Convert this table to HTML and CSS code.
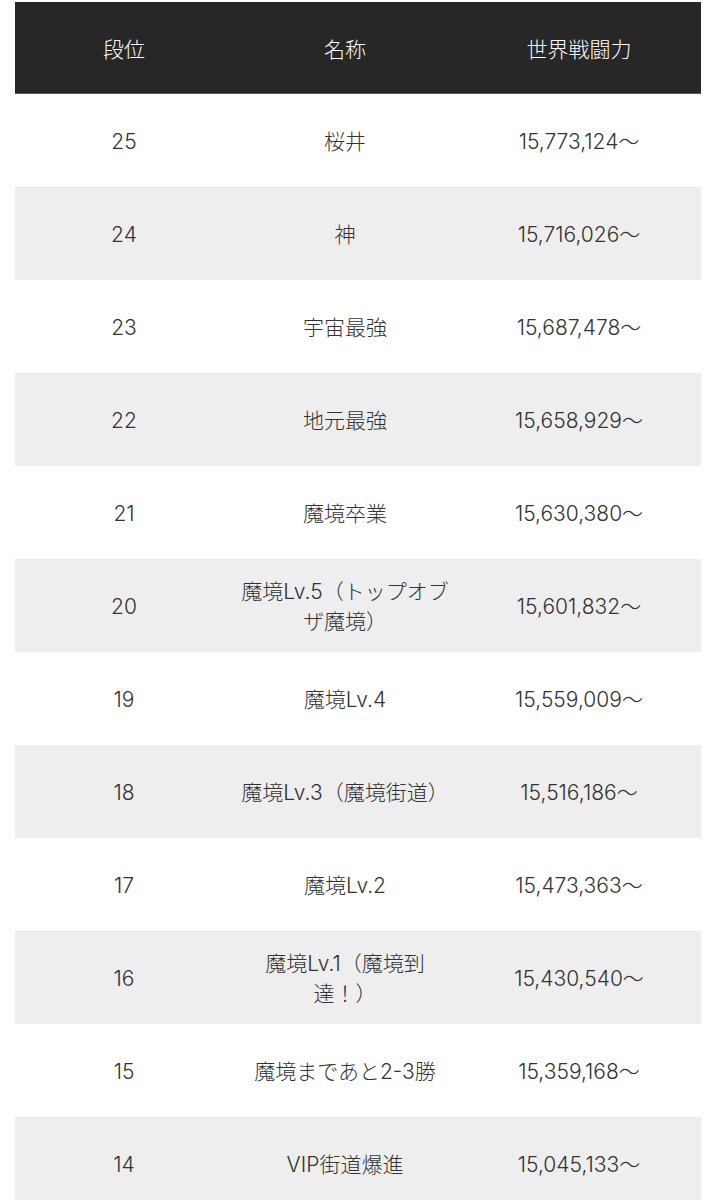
FILE: index.html
```html
<!DOCTYPE html>
<html lang="ja">
<head>
<meta charset="utf-8">
<title>段位表</title>
<link rel="stylesheet" href="styles.css">
</head>
<body>
<div class="page">
<table class="rank-table">
  <colgroup>
    <col class="c-rank">
    <col class="c-name">
    <col class="c-power">
  </colgroup>
  <thead>
    <tr><th>段位</th><th>名称</th><th>世界戦闘力</th></tr>
  </thead>
  <tbody>
    <tr><td>25</td><td>桜井</td><td>15,773,124〜</td></tr>
    <tr><td>24</td><td>神</td><td>15,716,026〜</td></tr>
    <tr><td>23</td><td>宇宙最強</td><td>15,687,478〜</td></tr>
    <tr><td>22</td><td>地元最強</td><td>15,658,929〜</td></tr>
    <tr><td>21</td><td>魔境卒業</td><td>15,630,380〜</td></tr>
    <tr><td>20</td><td>魔境Lv.5（トップオブザ魔境）</td><td>15,601,832〜</td></tr>
    <tr><td>19</td><td>魔境Lv.4</td><td>15,559,009〜</td></tr>
    <tr><td>18</td><td>魔境Lv.3（魔境街道）</td><td>15,516,186〜</td></tr>
    <tr><td>17</td><td>魔境Lv.2</td><td>15,473,363〜</td></tr>
    <tr><td>16</td><td>魔境Lv.1（魔境到達！）</td><td>15,430,540〜</td></tr>
    <tr><td>15</td><td>魔境まであと2-3勝</td><td>15,359,168〜</td></tr>
    <tr><td>14</td><td>VIP街道爆進</td><td>15,045,133〜</td></tr>
  </tbody>
</table>
</div>
</body>
</html>
```

FILE: styles.css
```css
html, body {
  margin: 0;
  padding: 0;
  background: #ffffff;
}

.page {
  padding: 2px 15px 0 15px;
}

.rank-table {
  width: 686px;
  border-collapse: collapse;
  table-layout: fixed;
  font-family: Inter, "Noto Sans CJK JP", "Noto Sans", sans-serif;
  font-weight: 300;
  font-size: 21px;
  color: #333333;
}

.c-rank { width: 218px; }
.c-name { width: 224px; }
.c-power { width: 244px; }

.rank-table th {
  height: 91px;
  padding: 0 6px;
  background: #272727;
  color: #ffffff;
  font-weight: 300;
  text-align: center;
  vertical-align: middle;
  border-bottom: 1px solid #5a5a5a;
}

.rank-table td {
  height: 93px;
  padding: 3px 6px 0 6px;
  text-align: center;
  vertical-align: middle;
  line-height: 30px;
  box-sizing: border-box;
}

.rank-table tbody tr:nth-child(even) td {
  background: #eeeeee;
}
```
